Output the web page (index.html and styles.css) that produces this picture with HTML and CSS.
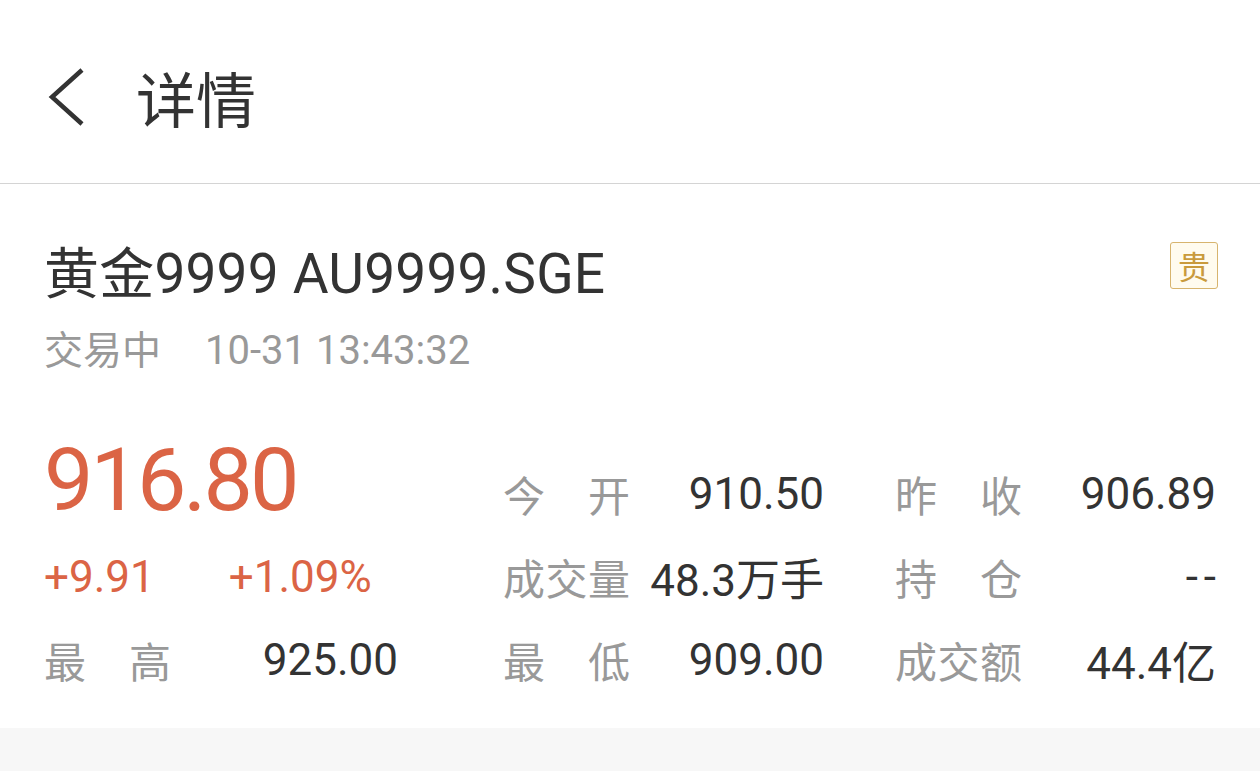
FILE: index.html
```html
<!DOCTYPE html>
<html>
<head>
    <title>详情</title>
    <link rel="stylesheet" href="styles.css">
</head>
<body>
    <div class="header">
        <svg class="back" width="40" height="60" viewBox="0 0 40 60">
            <polyline points="36,3 6,30 36,57" fill="none" stroke="#333" stroke-width="4.5"/>
        </svg>
        <h1>详情</h1>
    </div>

    <div class="card">
        <div class="title-row">
            <div class="name">黄金9999 AU9999.SGE</div>
            <div class="badge">贵</div>
        </div>
        <div class="status">
            <span>交易中</span>
            <span class="time">10-31 13:43:32</span>
        </div>

        <div class="quote">
            <div class="price">916.80</div>
            <div class="cell"><span class="label">今开</span><span class="value">910.50</span></div>
            <div class="cell"><span class="label">昨收</span><span class="value">906.89</span></div>

            <div class="change"><span>+9.91</span><span>+1.09%</span></div>
            <div class="cell"><span class="label">成交量</span><span class="value">48.3万手</span></div>
            <div class="cell"><span class="label">持仓</span><span class="value dash">--</span></div>

            <div class="cell first"><span class="label">最高</span><span class="value">925.00</span></div>
            <div class="cell"><span class="label">最低</span><span class="value">909.00</span></div>
            <div class="cell"><span class="label">成交额</span><span class="value">44.4亿</span></div>
        </div>
    </div>

    <div class="footer-band"></div>
</body>
</html>
```

FILE: styles.css
```css
body {
    font-family: Roboto, "Noto Sans CJK SC", sans-serif;
    background-color: #fff;
    color: #333;
    margin: 0;
}

.header {
    height: 184px;
    border-bottom: 1px solid #d4d4d4;
    display: flex;
    align-items: center;
    padding: 10px 0 0 46px;
    box-sizing: border-box;
}

.back {
    display: block;
    margin-right: 50px;
}

h1 {
    margin: 0;
    font-size: 60px;
    font-weight: normal;
    color: #333;
}

.card {
    padding: 52px 42px 0 44px;
    height: 544px;
    box-sizing: border-box;
}

.title-row {
    display: flex;
    justify-content: space-between;
    align-items: center;
    height: 66px;
}

.name {
    font-size: 55px;
    letter-spacing: 0.2px;
}

.badge {
    width: 48px;
    height: 47px;
    box-sizing: border-box;
    border: 1px solid #d7b46e;
    border-radius: 3px;
    background-color: #fffbef;
    color: #c99a3c;
    font-size: 32px;
    display: flex;
    justify-content: center;
    align-items: center;
    margin-top: -8px;
}

.status {
    margin-top: 17px;
    font-size: 39px;
    color: #999;
    display: flex;
    align-items: baseline;
    gap: 44px;
}

.time {
    font-size: 40px;
}

.quote {
    margin-top: 77px;
    display: grid;
    grid-template-columns: 459px 392px 321px;
    grid-auto-rows: 83px;
    align-items: center;
}

.price {
    font-size: 88px;
    letter-spacing: -3px;
    color: #db6445;
    line-height: 1;
    margin-top: -27px;
}

.change {
    display: flex;
    gap: 74px;
    font-size: 44px;
    color: #db6445;
}

.cell {
    width: 321px;
    display: flex;
    justify-content: space-between;
    align-items: center;
}

.cell.first {
    width: 354px;
}

.label {
    width: 127px;
    font-size: 42px;
    color: #999;
    text-align: justify;
    text-align-last: justify;
}

.value {
    font-size: 44px;
    color: #333;
}

.value.dash {
    letter-spacing: 6px;
    margin-right: -6px;
}

.footer-band {
    height: 43px;
    background-color: #f7f7f7;
}
```
